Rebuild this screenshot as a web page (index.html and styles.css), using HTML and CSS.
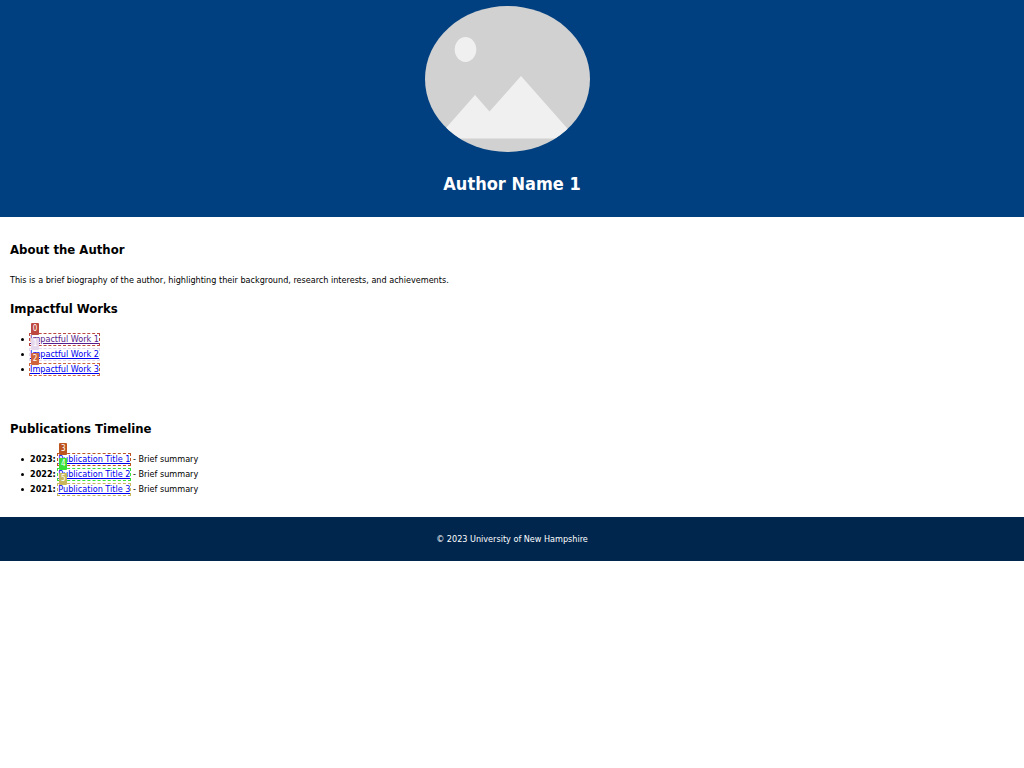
FILE: index.html
```html
<!DOCTYPE html>
<html lang="en">
<head>
<meta charset="utf-8">
<meta name="viewport" content="width=device-width, initial-scale=1">
<title>Author Name 1</title>
<link rel="stylesheet" href="styles.css">
</head>
<body>
<header class="banner">
  <svg class="portrait" viewBox="0 0 165 146" role="img" aria-label="Author portrait">
    <defs><clipPath id="oval"><ellipse cx="82.500" cy="73" rx="82.500" ry="73"/></clipPath></defs>
    <g clip-path="url(#oval)">
      <rect width="165" height="146" fill="#d1d1d1"/>
      <ellipse cx="40.500" cy="43.500" rx="10.800" ry="12.500" fill="#f0f0f0"/>
      <path d="M10 134.500 L50 89 L64.500 105.500 L96 70 L153 134.500 V132.500 H10Z" fill="#f0f0f0"/>
    </g>
  </svg>
  <h1 class="name">Author Name 1</h1>
</header>
<main>
  <section class="section">
    <h2 class="heading">About the Author</h2>
    <p class="bio">This is a brief biography of the author, highlighting their background, research interests, and achievements.</p>
    <h2 class="heading">Impactful Works</h2>
    <ul class="list">
      <li><a class="mark red visited" href="#work-1">Impactful Work 1<span class="tag">0</span></a></li>
      <li><a class="mark lilac" href="#work-2">Impactful Work 2<span class="tag">1</span></a></li>
      <li><a class="mark orange" href="#work-3">Impactful Work 3<span class="tag">2</span></a></li>
    </ul>
  </section>
  <section class="section">
    <h2 class="heading">Publications Timeline</h2>
    <ul class="list">
      <li><strong>2023:</strong> <a class="mark rust" href="#publication-1">Publication Title 1<span class="tag">3</span></a> - Brief summary</li>
      <li><strong>2022:</strong> <a class="mark green" href="#publication-2">Publication Title 2<span class="tag">4</span></a> - Brief summary</li>
      <li><strong>2021:</strong> <a class="mark khaki" href="#publication-3">Publication Title 3<span class="tag">5</span></a> - Brief summary</li>
    </ul>
  </section>
</main>
<footer class="footer"><p class="copyright">© 2023 University of New Hampshire</p></footer>
</body>
</html>
```
FILE: styles.css
```css
body {
  margin: 0;
  background: #fff;
  color: #000;
  font: 9px/15px "DejaVu Sans Condensed", "DejaVu Sans", sans-serif;
}
.banner {
  padding: 6px 10px 21px;
  background: #004080;
  color: #fff;
  text-align: center;
}
.portrait {
  display: inline-block;
  width: 165px;
  height: 146px;
  margin-right: 10px;
  vertical-align: top;
}
.name {
  margin: 20px 0 0;
  font-size: 18px;
  line-height: 24px;
}
.section {
  padding: 23px 10px 20px;
}
.section + .section {
  padding-top: 22px;
}
.heading {
  margin: 0;
  font-size: 13px;
  line-height: 20px;
}
.bio {
  margin: 13px 0 11px;
}
.list {
  margin: 13px 0 0;
  padding-left: 20px;
  list-style: none;
}
.list li::before {
  content: "";
  display: inline-block;
  width: 3px;
  height: 3px;
  margin: 0 6px 0 -9px;
  border-radius: 50%;
  background: #000;
  vertical-align: middle;
}
.mark {
  position: relative;
  display: inline-block;
  line-height: 11px;
  color: #00e;
  outline: 1px dashed var(--mark);
}
.visited {
  color: #551a8b;
}
.tag {
  position: absolute;
  left: 1px;
  top: -11px;
  width: 8px;
  height: 12px;
  border-radius: 1px;
  background: var(--mark);
  color: #fff;
  font-size: 8px;
  line-height: 12px;
  text-align: center;
}
.red { --mark: #bd4840; }
.lilac { --mark: #e6d8ec; }
.orange { --mark: #d0653b; }
.rust { --mark: #bd5520; }
.green { --mark: #37df37; }
.khaki { --mark: #c9b75c; }
.footer {
  padding: 15px 10px 14px;
  background: #00264d;
  color: #fff;
  text-align: center;
}
.copyright {
  margin: 0;
}
```
